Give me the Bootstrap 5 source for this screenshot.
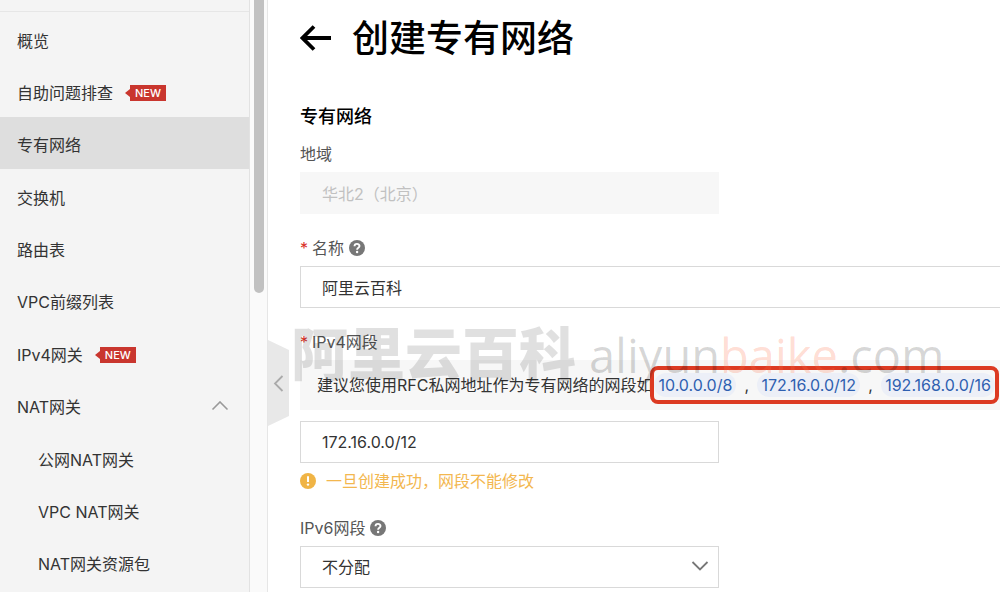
<!DOCTYPE html>
<html lang="zh-CN">
<head>
<meta charset="utf-8">
<meta name="viewport" content="width=device-width, initial-scale=1">
<title>创建专有网络</title>
<link href="https://cdn.jsdelivr.net/npm/bootstrap@5.3.0/dist/css/bootstrap.min.css" rel="stylesheet">
<style>
body{font-family:Inter,"Noto Sans CJK SC",sans-serif;font-size:16px;line-height:24px;color:#333;background:#fff}
.shell{height:100vh}
/* side navigation */
.side{width:250px;background:#f4f4f4;border-right:1px solid #e2e2e2}
.side-top{height:12px;border-bottom:1px solid #e6e6e6;margin-bottom:1px}
.side ul{list-style:none;margin:0;padding:0}
.side-link{display:flex;align-items:center;width:100%;height:52px;padding:3px 20px 0 17px;border:0;background:none;color:#333;text-decoration:none;text-align:left}
.side-link.active{background:#dedede}
.side-list>li:nth-child(3n+4),.side-sub{margin-top:1px!important}
.side-sub .side-link{padding-left:38px}
.new-flag{position:relative;margin-left:17px;padding:0 5px;background:#c9362e;color:#fff;font-size:11px;font-weight:500;line-height:16px}
.new-flag::before{content:"";position:absolute;left:-5px;top:4px;border:4px solid transparent;border-right:5px solid #c9362e;border-left:0}
.gutter{width:18px;background:#fafafa;border-right:1px solid #e6e6e6}
.thumb{width:10px;height:calc(50% - 3px);margin-left:4px;background:#c1c1c1;border-radius:0 0 5px 5px}
/* form */
.main-pane{padding:0 0 0 32px}
.fold{left:0;top:340px;width:21px;height:86px}
.page-title{font-size:37px;line-height:48px;font-weight:500;color:#000;gap:20px;padding-top:15px;margin-bottom:41px}
.section-title{font-size:18px;line-height:26px;font-weight:500;color:#000;margin-bottom:12px}
.field{width:419px;max-width:100%;margin-bottom:22px}
.field.full{width:auto}
.field-label{display:flex;align-items:center;color:#555;margin-bottom:6px;gap:5px}
.req{color:#d93026;width:7px}
.box-input{height:42px;border:1px solid #d9d9d9;border-radius:0;padding:0 21px 1px;font-size:16px;color:#333;background-color:#fff}
.box-input:disabled{background:#f7f7f7;border-color:#f7f7f7;color:#c1c1c1}
.full .box-input{border-right:0}
select.box-input{appearance:none}
.hint{height:50px;background:#f7f7f7;padding-left:17px;margin-bottom:11px}
.marked{height:38px;border:4px solid #dc3a22;border-radius:8px;margin:0 1px 0 -2px}
.chip{font-size:16px;color:#2f5fb0;text-decoration:none;background:#eceff7;border-radius:12px;padding:0 4px}
.watermark{left:-9px;top:-10px;pointer-events:none;white-space:nowrap;line-height:70px}
.wm-cn{font-size:57px;font-weight:900;color:rgba(0,0,0,.12)}
.wm-en{font-family:"Open Sans","Noto Sans",sans-serif;font-size:47px;font-weight:400;color:rgba(0,0,0,.16);margin-left:13px}
.wm-en span{color:rgba(255,110,70,.24)}
.warn{color:#f3b74f;gap:10px;margin:6px 0 23px}
</style>
</head>
<body>
<div class="shell d-flex overflow-hidden">
  <nav class="side flex-shrink-0" aria-label="专有网络">
    <div class="side-top"></div>
    <ul class="side-list">
      <li><a class="side-link" href="#">概览</a></li>
      <li><a class="side-link" href="#">自助问题排查<span class="new-flag">NEW</span></a></li>
      <li><a class="side-link active" href="#" aria-current="page">专有网络</a></li>
      <li><a class="side-link" href="#">交换机</a></li>
      <li><a class="side-link" href="#">路由表</a></li>
      <li><a class="side-link" href="#">VPC前缀列表</a></li>
      <li><a class="side-link" href="#">IPv4网关<span class="new-flag">NEW</span></a></li>
      <li>
        <button class="side-link justify-content-between" type="button" data-bs-toggle="collapse" data-bs-target="#nat" aria-expanded="true">NAT网关
          <svg width="18" height="12" viewBox="0 0 18 12" fill="none" stroke="#999" stroke-width="1.6"><path d="M1.500 8.500 9 1l7.500 7.500"/></svg>
        </button>
        <ul class="side-sub collapse show" id="nat">
          <li><a class="side-link" href="#">公网NAT网关</a></li>
          <li><a class="side-link" href="#">VPC NAT网关</a></li>
          <li><a class="side-link" href="#">NAT网关资源包</a></li>
        </ul>
      </li>
    </ul>
  </nav>
  <div class="gutter flex-shrink-0"><div class="thumb"></div></div>

  <main class="main-pane position-relative flex-grow-1 overflow-hidden">
    <button class="fold position-absolute border-0 bg-transparent p-0 d-flex" type="button" aria-label="收起">
      <svg width="21" height="86" viewBox="0 0 21 86"><path d="M0 0 21 10V76L0 86Z" fill="#e8e8e8"/><path d="M14.500 36 7 43.500 14.500 51" fill="none" stroke="#aaa" stroke-width="1.800"/></svg>
    </button>
    <h1 class="page-title d-flex align-items-center">
      <a href="#" class="d-flex text-reset" aria-label="返回"><svg width="32" height="28" viewBox="0 0 32 28" fill="none" stroke="#000" stroke-width="3.800"><path d="M31 13H3M14 1.500 2.500 13 14 24.500"/></svg></a>
      创建专有网络
    </h1>
    <form>
      <h2 class="section-title">专有网络</h2>
      <div class="field">
        <label class="field-label" for="region">地域</label>
        <input class="form-control box-input" id="region" value="华北2（北京）" disabled>
      </div>
      <div class="field full">
        <label class="field-label" for="name"><span class="req">*</span>名称
          <svg width="16" height="16" viewBox="0 0 16 16"><circle cx="8" cy="8" r="8" fill="#777"/><path d="M5.500 6.300C5.500 3.100 10.500 3.200 10.500 6.100 10.500 7.800 8.100 7.700 8.100 9.700" fill="none" stroke="#fff" stroke-width="1.900"/><circle cx="8.100" cy="12" r="1.200" fill="#fff"/></svg>
        </label>
        <input class="form-control box-input" id="name" value="阿里云百科">
      </div>
      <div class="position-relative">
        <label class="field-label" for="v4"><span class="req">*</span>IPv4网段</label>
        <div class="hint d-flex align-items-center text-nowrap">
          <span>建议您使用RFC私网地址作为专有网络的网段如</span>
          <div class="marked d-flex align-items-center justify-content-between flex-grow-1">
            <a class="chip" href="#">10.0.0.0/8</a><span>,</span>
            <a class="chip" href="#">172.16.0.0/12</a><span>,</span>
            <a class="chip" href="#">192.168.0.0/16</a>
          </div>
        </div>
        <div class="watermark position-absolute d-flex align-items-center" aria-hidden="true"><span class="wm-cn">阿里云百科</span><span class="wm-en">aliyun<span>baike</span>.com</span></div>
      </div>
      <div class="field">
        <input class="form-control box-input" id="v4" value="172.16.0.0/12">
        <p class="warn d-flex align-items-center">
          <svg width="16" height="16" viewBox="0 0 16 16"><circle cx="8" cy="8" r="8" fill="#f0b445"/><path d="M8 3.300V9" stroke="#fff" stroke-width="2"/><circle cx="8" cy="11.600" r="1.200" fill="#fff"/></svg>
          一旦创建成功，网段不能修改
        </p>
      </div>
      <div class="field">
        <label class="field-label" for="v6">IPv6网段
          <svg width="16" height="16" viewBox="0 0 16 16"><circle cx="8" cy="8" r="8" fill="#777"/><path d="M5.500 6.300C5.500 3.100 10.500 3.200 10.500 6.100 10.500 7.800 8.100 7.700 8.100 9.700" fill="none" stroke="#fff" stroke-width="1.900"/><circle cx="8.100" cy="12" r="1.200" fill="#fff"/></svg>
        </label>
        <div class="position-relative">
          <select class="form-control box-input" id="v6"><option>不分配</option></select>
          <svg class="position-absolute top-50 end-0 translate-middle-y me-2 pe-none" width="22" height="12" viewBox="0 0 22 12" fill="none" stroke="#777" stroke-width="1.800"><path d="M3.500 1 11 8.500 18.500 1"/></svg>
        </div>
      </div>
    </form>
  </main>
</div>
<script src="https://cdn.jsdelivr.net/npm/bootstrap@5.3.0/dist/js/bootstrap.bundle.min.js"></script>
</body>
</html>
